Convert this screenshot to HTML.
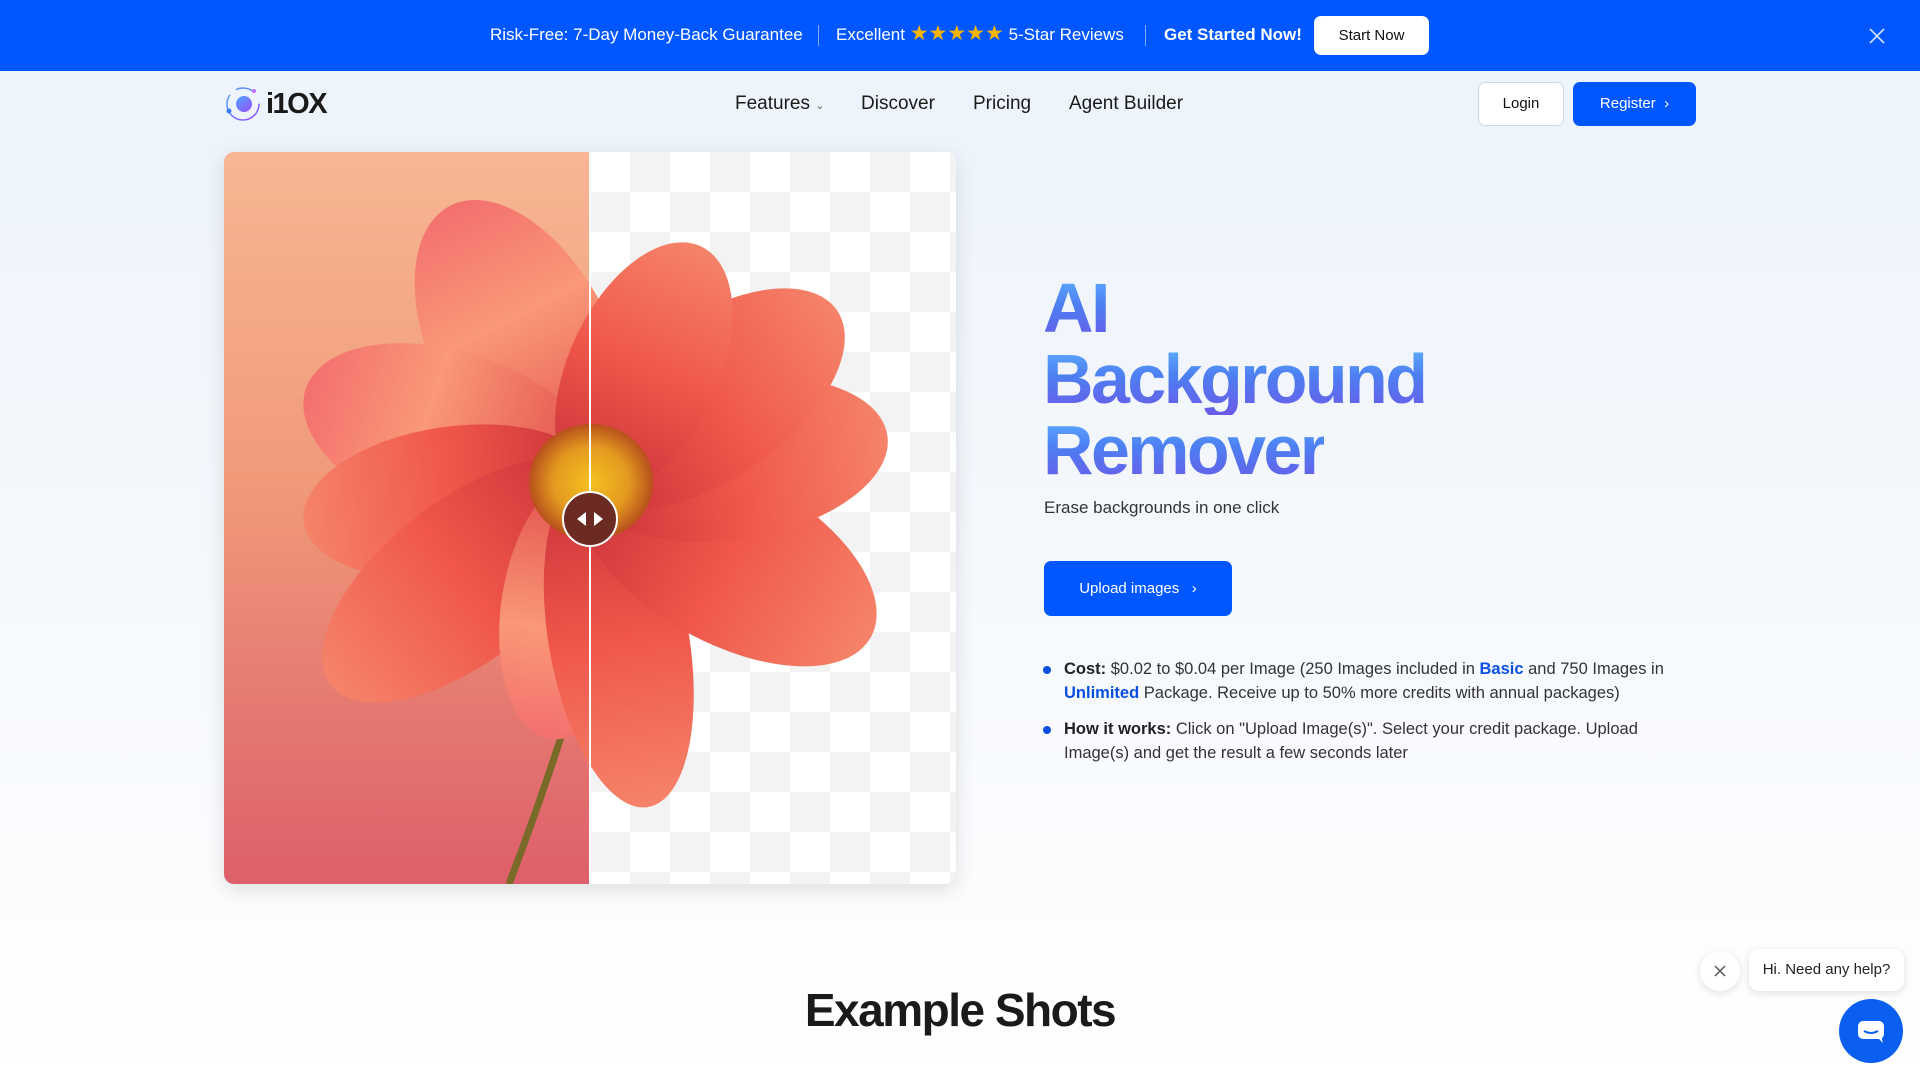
<!DOCTYPE html>
<html><head><meta charset="utf-8"><style>
*{margin:0;padding:0;box-sizing:border-box}
body{width:1920px;height:1080px;overflow:hidden;font-family:"Liberation Sans",sans-serif;background:linear-gradient(180deg,#ecf3fb 0%,#f6f9fd 60%,#fff 100%);position:relative;color:#222}
.top{position:absolute;left:0;top:0;width:1920px;height:71px;background:#0057ff;color:#fff;font-size:17px}
.top span{position:absolute;top:25px;white-space:nowrap;line-height:20px}
.sep{position:absolute;top:25px;width:1px;height:21px;background:rgba(255,255,255,.5)}
.startnow{position:absolute;left:1314px;top:16px;width:115px;height:39px;background:#fff;color:#111;border-radius:7px;font-size:15px;text-align:center;line-height:39px}
.nav{position:absolute;top:93px;font-size:19px;color:#1a1a1a}
.btn{position:absolute;border-radius:7px;font-size:15px;text-align:center}
.h{position:absolute;left:1043px;font-size:70px;font-weight:bold;letter-spacing:-2.6px;line-height:72px;background:linear-gradient(180deg,#5fb4ff 0%,#4d7ff2 45%,#6a5ae8 100%);-webkit-background-clip:text;background-clip:text;color:transparent;white-space:nowrap}
.b{position:absolute;left:1064px;font-size:16.5px;color:#333;line-height:24px;width:640px}
.b b{color:#222}
.b a{color:#0a4fe0;font-weight:bold;text-decoration:none}
.dot{position:absolute;left:-21px;top:9px;width:8px;height:8px;border-radius:50%;background:#0a4fe0}
</style></head><body>
<div class="top">
<span style="left:490px">Risk-Free: 7-Day Money-Back Guarantee</span>
<div class="sep" style="left:818px"></div>
<span style="left:836px">Excellent <b style="display:inline-block;font-weight:normal;color:#f7b500;font-size:21px;line-height:17px;vertical-align:top">★★★★★</b> 5-Star Reviews</span>
<div class="sep" style="left:1145px"></div>
<span style="left:1164px;font-weight:bold">Get Started Now!</span>
<div class="startnow">Start Now</div>
<svg style="position:absolute;left:1869px;top:28px" width="16" height="16"><path d="M1 1L15 15M15 1L1 15" stroke="#cfe0ff" stroke-width="1.6"/></svg>
</div>
<svg style="position:absolute;left:224px;top:85px" width="38" height="38" viewBox="0 0 38 38"><defs><linearGradient id="lg" x1="0" y1="0" x2="1" y2="1"><stop offset="0" stop-color="#4aa8ff"/><stop offset="1" stop-color="#9b4dff"/></linearGradient></defs><circle cx="19" cy="19" r="16" fill="none" stroke="url(#lg)" stroke-width="1.5" stroke-dasharray="60 8 20 12"/><circle cx="20" cy="19" r="8" fill="url(#lg)"/><circle cx="5" cy="26" r="2.5" fill="#3b7cff"/><circle cx="30" cy="6" r="2" fill="#c070ff"/></svg>
<div style="position:absolute;left:266px;top:88px;font-size:29px;font-weight:bold;letter-spacing:-1.5px;color:#1a1a1a">i1OX</div>
<div class="nav" style="left:735px">Features <span style="font-size:11px;color:#666">⌄</span></div>
<div class="nav" style="left:861px">Discover</div>
<div class="nav" style="left:973px">Pricing</div>
<div class="nav" style="left:1069px">Agent Builder</div>
<div class="btn" style="left:1478px;top:82px;width:86px;height:44px;line-height:42px;background:#fff;border:1px solid #d0d6e0;color:#111">Login</div>
<div class="btn" style="left:1573px;top:82px;width:123px;height:44px;line-height:44px;background:#0057ff;color:#fff">Register &nbsp;›</div>

<div style="position:absolute;left:224px;top:152px;width:732px;height:732px;border-radius:10px;overflow:hidden;box-shadow:0 6px 20px rgba(0,0,0,.12)">
<svg width="732" height="732" viewBox="0 0 732 732">
<defs>
<linearGradient id="bg" x1="0" y1="0" x2="0" y2="1"><stop offset="0" stop-color="#f8b694"/><stop offset="0.45" stop-color="#f09a7a"/><stop offset="1" stop-color="#dd5f6a"/></linearGradient>
<pattern id="ck" width="80" height="80" patternUnits="userSpaceOnUse" x="6" y="0"><rect width="80" height="80" fill="#fff"/><rect width="40" height="40" fill="#f3f3f3"/><rect x="40" y="40" width="40" height="40" fill="#f3f3f3"/></pattern>
<linearGradient id="pt" x1="0" y1="0" x2="1" y2="0"><stop offset="0" stop-color="#c8303a"/><stop offset="0.5" stop-color="#f0574a"/><stop offset="1" stop-color="#f5836a"/></linearGradient>
<linearGradient id="pt2" x1="0" y1="0" x2="1" y2="0"><stop offset="0" stop-color="#e04848"/><stop offset="0.6" stop-color="#fa9878"/><stop offset="1" stop-color="#f3706e"/></linearGradient>
<radialGradient id="cen"><stop offset="0" stop-color="#f5c020"/><stop offset="0.6" stop-color="#e39a20"/><stop offset="1" stop-color="#b8501c"/></radialGradient>
</defs>
<rect x="0" y="0" width="366" height="732" fill="url(#bg)"/>
<rect x="366" y="0" width="366" height="732" fill="url(#ck)"/>
<path d="M345 560 Q320 640 285 732" stroke="#7a6a2a" stroke-width="7" fill="none"/>
<g transform="translate(367,330)">
<g transform="rotate(-117)"><ellipse cx="150" cy="0" rx="160" ry="90" fill="url(#pt2)"/></g>
<g transform="rotate(-162)"><ellipse cx="145" cy="0" rx="155" ry="85" fill="url(#pt2)"/></g>
<g transform="rotate(172)"><ellipse cx="140" cy="0" rx="150" ry="75" fill="url(#pt)"/></g>
<g transform="rotate(142)"><ellipse cx="160" cy="0" rx="170" ry="80" fill="url(#pt)"/></g>
<g transform="rotate(99)"><ellipse cx="125" cy="0" rx="135" ry="70" fill="url(#pt2)"/></g>
<g transform="rotate(80)"><ellipse cx="160" cy="0" rx="170" ry="70" fill="url(#pt)"/></g>
<g transform="rotate(29)"><ellipse cx="155" cy="0" rx="165" ry="85" fill="url(#pt)"/></g>
<g transform="rotate(-9)"><ellipse cx="145" cy="0" rx="155" ry="80" fill="url(#pt)"/></g>
<g transform="rotate(-35)"><ellipse cx="145" cy="0" rx="155" ry="80" fill="url(#pt)"/></g>
<g transform="rotate(-65)"><ellipse cx="125" cy="0" rx="135" ry="75" fill="url(#pt)"/></g>
<ellipse cx="0" cy="0" rx="62" ry="58" fill="url(#cen)"/>
</g>
<rect x="365" y="0" width="2" height="732" fill="#fff"/>
<circle cx="366" cy="367" r="27" fill="#6b2a22" stroke="#fff" stroke-width="2"/>
<path d="M353 367 L362 360 L362 374Z M379 367 L370 360 L370 374Z" fill="#fff"/>
</svg></div>

<div class="h" style="top:272px">AI</div>
<div class="h" style="top:343px">Background</div>
<div class="h" style="top:414px">Remover</div>
<div style="position:absolute;left:1044px;top:498px;font-size:17px;color:#333">Erase backgrounds in one click</div>
<div class="btn" style="left:1044px;top:561px;width:188px;height:55px;line-height:55px;background:#0057ff;color:#fff;font-size:15px">Upload images &nbsp; ›</div>
<div class="b" style="top:657px"><div class="dot"></div><b>Cost:</b> $0.02 to $0.04 per Image (250 Images included in <a>Basic</a> and 750 Images in <a>Unlimited</a> Package. Receive up to 50% more credits with annual packages)</div>
<div class="b" style="top:717px"><div class="dot"></div><b>How it works:</b> Click on "Upload Image(s)". Select your credit package. Upload Image(s) and get the result a few seconds later</div>

<div style="position:absolute;left:0;width:1920px;top:983px;text-align:center;font-size:46px;font-weight:bold;letter-spacing:-1.5px;color:#1a1a1a">Example Shots</div>

<div style="position:absolute;left:1700px;top:951px;width:40px;height:40px;border-radius:50%;background:#fff;box-shadow:0 2px 8px rgba(0,0,0,.12)"><svg width="40" height="40"><path d="M15 15L25 25M25 15L15 25" stroke="#555" stroke-width="1.5"/></svg></div>
<div style="position:absolute;left:1749px;top:949px;width:155px;height:42px;border-radius:10px;background:#fff;box-shadow:0 2px 8px rgba(0,0,0,.12);font-size:15px;line-height:42px;text-align:center;color:#222">Hi. Need any help?</div>
<div style="position:absolute;left:1839px;top:999px;width:64px;height:64px;border-radius:50%;background:#0a5ff0"><svg width="64" height="64"><rect x="19" y="22" width="26" height="18" rx="5" fill="#fff"/><path d="M38 38L44 44L42 36Z" fill="#fff"/><path d="M25 32Q32 36 39 32" stroke="#0a5ff0" stroke-width="2" fill="none"/></svg></div>
</body></html>
